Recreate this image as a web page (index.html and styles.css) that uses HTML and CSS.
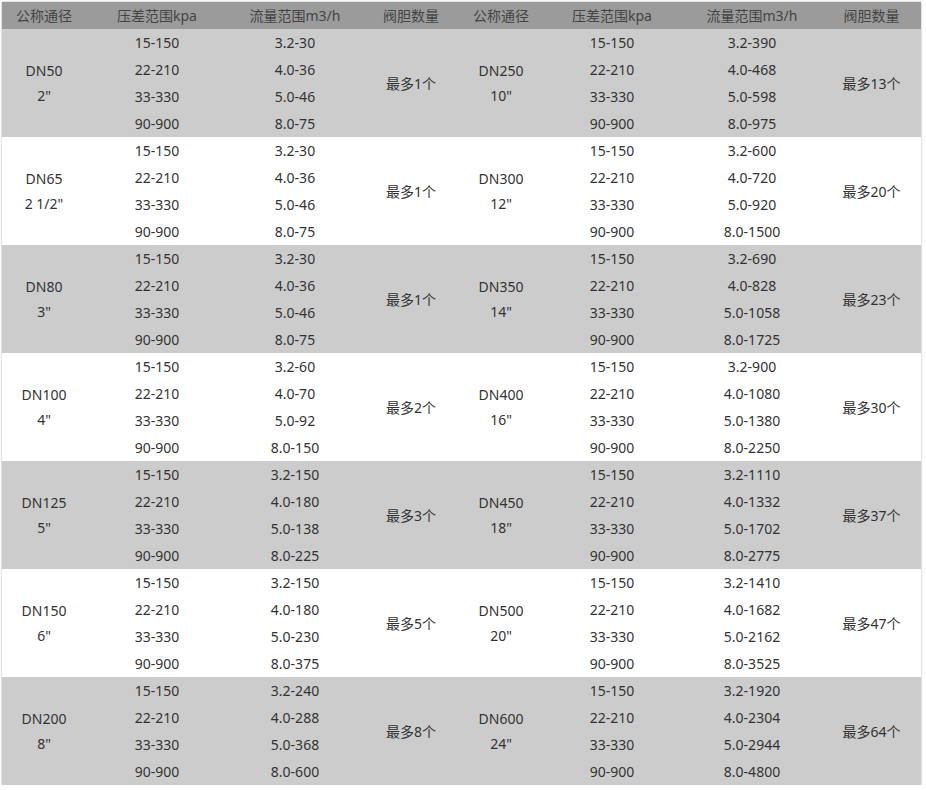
FILE: index.html
```html
<!DOCTYPE html>
<html lang="zh">
<head>
<meta charset="utf-8">
<title>规格表</title>
<link rel="stylesheet" href="styles.css">
</head>
<body>
<div class="wrap">
<table class="spec">
  <colgroup>
    <col class="c1"><col class="c2"><col class="c3"><col class="c4">
    <col class="c5"><col class="c6"><col class="c7"><col class="c8">
  </colgroup>
  <thead>
    <tr>
      <th>公称通径</th><th>压差范围kpa</th><th>流量范围m3/h</th><th>阀胆数量</th>
      <th>公称通径</th><th>压差范围kpa</th><th>流量范围m3/h</th><th>阀胆数量</th>
    </tr>
  </thead>
  <tbody class="grey">
    <tr><td rowspan="4" class="dn">DN50<br>2"</td><td>15-150</td><td>3.2-30</td><td rowspan="4">最多1个</td><td rowspan="4" class="dn">DN250<br>10"</td><td>15-150</td><td>3.2-390</td><td rowspan="4">最多13个</td></tr>
    <tr><td>22-210</td><td>4.0-36</td><td>22-210</td><td>4.0-468</td></tr>
    <tr><td>33-330</td><td>5.0-46</td><td>33-330</td><td>5.0-598</td></tr>
    <tr><td>90-900</td><td>8.0-75</td><td>90-900</td><td>8.0-975</td></tr>
  </tbody>
  <tbody class="white">
    <tr><td rowspan="4" class="dn">DN65<br>2 1/2"</td><td>15-150</td><td>3.2-30</td><td rowspan="4">最多1个</td><td rowspan="4" class="dn">DN300<br>12"</td><td>15-150</td><td>3.2-600</td><td rowspan="4">最多20个</td></tr>
    <tr><td>22-210</td><td>4.0-36</td><td>22-210</td><td>4.0-720</td></tr>
    <tr><td>33-330</td><td>5.0-46</td><td>33-330</td><td>5.0-920</td></tr>
    <tr><td>90-900</td><td>8.0-75</td><td>90-900</td><td>8.0-1500</td></tr>
  </tbody>
  <tbody class="grey">
    <tr><td rowspan="4" class="dn">DN80<br>3"</td><td>15-150</td><td>3.2-30</td><td rowspan="4">最多1个</td><td rowspan="4" class="dn">DN350<br>14"</td><td>15-150</td><td>3.2-690</td><td rowspan="4">最多23个</td></tr>
    <tr><td>22-210</td><td>4.0-36</td><td>22-210</td><td>4.0-828</td></tr>
    <tr><td>33-330</td><td>5.0-46</td><td>33-330</td><td>5.0-1058</td></tr>
    <tr><td>90-900</td><td>8.0-75</td><td>90-900</td><td>8.0-1725</td></tr>
  </tbody>
  <tbody class="white">
    <tr><td rowspan="4" class="dn">DN100<br>4"</td><td>15-150</td><td>3.2-60</td><td rowspan="4">最多2个</td><td rowspan="4" class="dn">DN400<br>16"</td><td>15-150</td><td>3.2-900</td><td rowspan="4">最多30个</td></tr>
    <tr><td>22-210</td><td>4.0-70</td><td>22-210</td><td>4.0-1080</td></tr>
    <tr><td>33-330</td><td>5.0-92</td><td>33-330</td><td>5.0-1380</td></tr>
    <tr><td>90-900</td><td>8.0-150</td><td>90-900</td><td>8.0-2250</td></tr>
  </tbody>
  <tbody class="grey">
    <tr><td rowspan="4" class="dn">DN125<br>5"</td><td>15-150</td><td>3.2-150</td><td rowspan="4">最多3个</td><td rowspan="4" class="dn">DN450<br>18"</td><td>15-150</td><td>3.2-1110</td><td rowspan="4">最多37个</td></tr>
    <tr><td>22-210</td><td>4.0-180</td><td>22-210</td><td>4.0-1332</td></tr>
    <tr><td>33-330</td><td>5.0-138</td><td>33-330</td><td>5.0-1702</td></tr>
    <tr><td>90-900</td><td>8.0-225</td><td>90-900</td><td>8.0-2775</td></tr>
  </tbody>
  <tbody class="white">
    <tr><td rowspan="4" class="dn">DN150<br>6"</td><td>15-150</td><td>3.2-150</td><td rowspan="4">最多5个</td><td rowspan="4" class="dn">DN500<br>20"</td><td>15-150</td><td>3.2-1410</td><td rowspan="4">最多47个</td></tr>
    <tr><td>22-210</td><td>4.0-180</td><td>22-210</td><td>4.0-1682</td></tr>
    <tr><td>33-330</td><td>5.0-230</td><td>33-330</td><td>5.0-2162</td></tr>
    <tr><td>90-900</td><td>8.0-375</td><td>90-900</td><td>8.0-3525</td></tr>
  </tbody>
  <tbody class="grey">
    <tr><td rowspan="4" class="dn">DN200<br>8"</td><td>15-150</td><td>3.2-240</td><td rowspan="4">最多8个</td><td rowspan="4" class="dn">DN600<br>24"</td><td>15-150</td><td>3.2-1920</td><td rowspan="4">最多64个</td></tr>
    <tr><td>22-210</td><td>4.0-288</td><td>22-210</td><td>4.0-2304</td></tr>
    <tr><td>33-330</td><td>5.0-368</td><td>33-330</td><td>5.0-2944</td></tr>
    <tr><td>90-900</td><td>8.0-600</td><td>90-900</td><td>8.0-4800</td></tr>
  </tbody>
</table>
</div>
</body>
</html>
```

FILE: styles.css
```css
html, body {
  margin: 0;
  padding: 0;
  background: #ffffff;
}

.wrap {
  width: 919px;
  margin: 2px 0 0 2px;
  box-shadow: 0 0 2px rgba(0, 0, 0, 0.35);
}

.spec {
  width: 919px;
  table-layout: fixed;
  border-collapse: collapse;
  border-spacing: 0;
  font-family: "Noto Sans", "Noto Sans CJK SC", sans-serif;
  font-size: 14px;
  color: #333333;
}

.c1 { width: 84px; }
.c2 { width: 142px; }
.c3 { width: 134px; }
.c4 { width: 98px; }
.c5 { width: 82px; }
.c6 { width: 140px; }
.c7 { width: 140px; }
.c8 { width: 99px; }

.spec th {
  height: 27px;
  padding: 0;
  background: #9b9b9b;
  color: #444444;
  font-weight: normal;
  text-align: center;
  line-height: 27px;
}

.spec td {
  height: 27px;
  padding: 0;
  text-align: center;
  vertical-align: middle;
  line-height: 27px;
}

.spec td.dn {
  line-height: 25px;
}

.grey td {
  background: #cccccc;
}

.white td {
  background: #ffffff;
}
```
